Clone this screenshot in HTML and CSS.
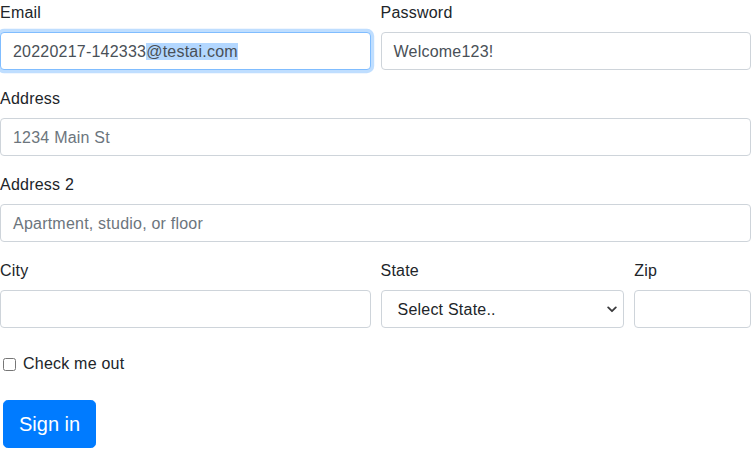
FILE: index.html
```html
<!DOCTYPE html>
<html lang="en">
<head>
<meta charset="utf-8">
<title>Form</title>
<link rel="stylesheet" href="styles.css">
</head>
<body>
<form class="form">
  <div class="row">
    <div class="group col-6">
      <label class="label">Email</label>
      <div class="input focus">20220217-142333<span class="sel">@testai.com</span></div>
    </div>
    <div class="group col-6">
      <label class="label">Password</label>
      <div class="input">Welcome123!</div>
    </div>
  </div>
  <div class="group">
    <label class="label">Address</label>
    <div class="input placeholder">1234 Main St</div>
  </div>
  <div class="group">
    <label class="label">Address 2</label>
    <div class="input placeholder">Apartment, studio, or floor</div>
  </div>
  <div class="row">
    <div class="group col-6">
      <label class="label">City</label>
      <div class="input"></div>
    </div>
    <div class="group col-4">
      <label class="label">State</label>
      <div class="select-wrap">
        <div class="input select">Select State..</div>
        <svg class="chevron" width="10" height="7" viewBox="0 0 10 7"><path d="M1.2 1.4 L5 5.2 L8.8 1.4" fill="none" stroke="#3a3a3c" stroke-width="1.8" stroke-linecap="round" stroke-linejoin="round"/></svg>
      </div>
    </div>
    <div class="group col-2">
      <label class="label">Zip</label>
      <div class="input"></div>
    </div>
  </div>
  <div class="check">
    <span class="box"></span>
    <span class="check-label">Check me out</span>
  </div>
  <button type="button" class="btn">Sign in</button>
</form>
</body>
</html>
```
FILE: styles.css
```css
html, body {
  margin: 0;
  padding: 0;
  background: #fff;
}
body {
  font-family: "Liberation Sans", Arial, sans-serif;
  font-size: 16px;
  line-height: 24px;
  letter-spacing: 0.22px;
  color: #212529;
  width: 751px;
  overflow: hidden;
}
.form {
  display: block;
  width: 751px;
}
.row {
  display: flex;
  margin: 0 -5px;
}
.row > .group {
  padding: 0 5px;
  box-sizing: border-box;
}
.col-6 { width: 50%; }
.col-4 { width: 33.3333%; }
.col-2 { width: 16.6667%; }
.group {
  margin-bottom: 16px;
}
.label {
  display: block;
  height: 23px;
  padding-top: 1px;
  margin-bottom: 8px;
}
.input {
  box-sizing: border-box;
  height: 38px;
  border: 1px solid #ced4da;
  border-radius: 4px;
  padding: 7px 12px 5px;
  color: #495057;
  background: #fff;
  white-space: nowrap;
}
.input.focus {
  border-color: #80bdff;
  box-shadow: 0 0 0 3.2px rgba(0, 123, 255, 0.25);
}
.sel {
  background: #b3d7ff;
}
.placeholder {
  color: #6c757d;
}
.select-wrap {
  position: relative;
}
.select {
  padding-left: 16px;
  color: #212529;
}
.chevron {
  position: absolute;
  right: 7px;
  top: 16px;
}
.check {
  display: flex;
  align-items: center;
  height: 24px;
  margin-top: 8px;
  margin-bottom: 24px;
}
.box {
  box-sizing: border-box;
  width: 13px;
  height: 13px;
  border: 1px solid #767676;
  border-radius: 2.5px;
  margin-left: 3px;
  margin-right: 7px;
  background: #fff;
}
.check-label {
  color: #212529;
}
.btn {
  display: block;
  margin-left: 3px;
  height: 48px;
  padding: 8px 15px;
  border: 1px solid #007bff;
  border-radius: 4.8px;
  background: #007bff;
  color: #fff;
  font-family: "Liberation Sans", Arial, sans-serif;
  font-size: 20px;
  line-height: 30px;
  letter-spacing: 0;
}
```
